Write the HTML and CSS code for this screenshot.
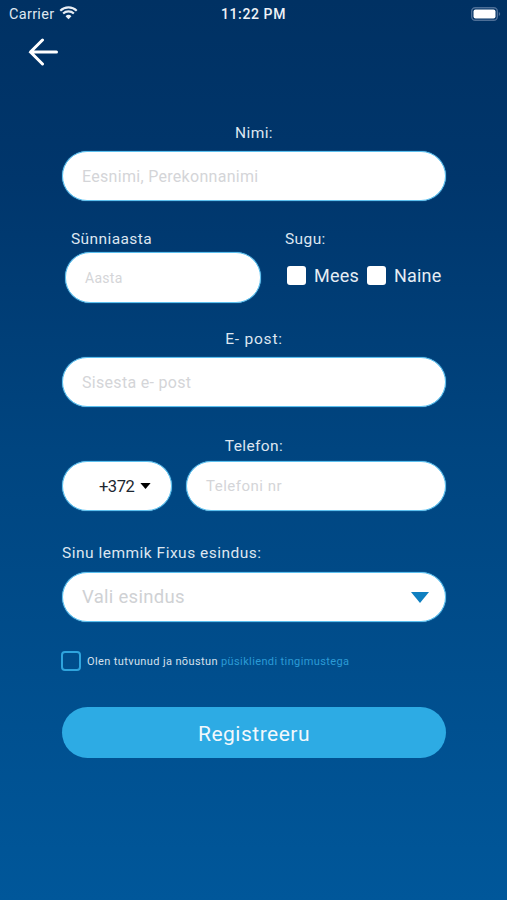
FILE: index.html
```html
<!DOCTYPE html>
<html lang="et">
<head>
<meta charset="utf-8">
<title>Registreeru</title>
<link rel="stylesheet" href="styles.css">
</head>
<body>
<div class="screen">
  <header class="status">
    <div class="status-left">
      <span>Carrier</span>
      <svg class="wifi" viewBox="0 0 18 13" width="19" height="14"><path d="M1.200 4.300A11.300 11.300 0 0 1 16.800 4.300M3.900 7A7.400 7.400 0 0 1 14.100 7" fill="none" stroke="#e8eef5" stroke-width="2"/><path d="M6.200 9.500A4 4 0 0 1 11.800 9.500L9 12.500z" fill="#e8eef5"/></svg>
    </div>
    <div class="status-time">11:22 PM</div>
    <svg class="battery" viewBox="0 0 30 14" width="30" height="14"><rect x="0.700" y="0.700" width="25.600" height="12.600" rx="3.500" fill="none" stroke="#4d6f97" stroke-width="1.400"/><rect x="2.500" y="2.500" width="22" height="9" rx="2" fill="#fff"/><path d="M27.800 5v4a2.200 2.200 0 0 0 1.400-2 2.200 2.200 0 0 0-1.400-2z" fill="#4d6f97"/></svg>
  </header>
  <div class="nav">
    <svg class="back" viewBox="0 0 30 28" width="30" height="28"><path d="M28.500 14H2.500M14.500 2L2.500 14l12 12" fill="none" stroke="#fff" stroke-width="3" stroke-linecap="round"/></svg>
  </div>
  <form class="form">
    <label class="label center first">Nimi:</label>
    <div class="field"><span class="ph">Eesnimi, Perekonnanimi</span></div>

    <div class="split">
      <div class="year">
        <label class="label year-label">Sünniaasta</label>
        <div class="field"><span class="ph small">Aasta</span></div>
      </div>
      <div class="gender">
        <label class="label">Sugu:</label>
        <div class="gender-opts">
          <span class="box"></span><span class="opt">Mees</span>
          <span class="box second"></span><span class="opt">Naine</span>
        </div>
      </div>
    </div>

    <label class="label center email-label">E- post:</label>
    <div class="field"><span class="ph">Sisesta e- post</span></div>

    <label class="label center phone-label">Telefon:</label>
    <div class="phone">
      <div class="field code"><span class="code-val">+372</span><svg class="code-caret" viewBox="0 0 12 7" width="13" height="6"><path d="M0 0h12L6 7z" fill="#000"/></svg></div>
      <div class="field grow"><span class="ph phone-ph">Telefoni nr</span></div>
    </div>

    <label class="label fav-label">Sinu lemmik Fixus esindus:</label>
    <div class="field select"><span class="ph big">Vali esindus</span><svg viewBox="0 0 18 11" width="18" height="11"><path d="M0 0h18L9 11z" fill="#0f7fc0"/></svg></div>

    <div class="terms"><span class="terms-box"></span><span class="terms-text">Olen tutvunud ja nõustun <span class="link">püsikliendi tingimustega</span></span></div>

    <button type="button" class="submit">Registreeru</button>
  </form>
</div>
</body>
</html>
```
FILE: styles.css
```css
* { box-sizing: border-box; }
html, body { margin: 0; padding: 0; }
body { font-family: Roboto, "Liberation Sans", sans-serif; color: #e3ebf3; }
.screen {
  width: 507px; height: 900px; overflow: hidden;
  background: linear-gradient(180deg, #003163 0%, #00366c 20%, #004580 50%, #00579a 100%);
}
.status {
  height: 28px; display: flex; align-items: center; justify-content: space-between;
  padding: 0 6px 0 9px; position: relative; font-size: 14.500px; color: #dfe7f0;
}
.status-left { display: flex; align-items: center; gap: 5px; letter-spacing: 0.300px; }
.wifi { margin-top: -2px; }
.status-time { position: absolute; left: 0; right: 0; text-align: center; font-size: 14px; font-weight: 500; color: #eef2f7; letter-spacing: 0.600px; }
.nav { height: 50px; padding: 10px 0 0 28px; }
.back { display: block; }
.form { padding: 0 61px 0 62px; display: flex; flex-direction: column; }
.label { display: block; font-size: 15.500px; line-height: 20px; color: #dde6f0; letter-spacing: 0.400px; }
.center { text-align: center; }
.first { margin: 45px 0 8px; }
.field {
  height: 50px; background: #fff; border-radius: 25px; border: 1.500px solid #5cc0ef;
  box-shadow: 0 0 1px #5cc0ef;
  display: flex; align-items: center; padding-left: 19px;
}
.ph { font-size: 16px; color: #d4d5d8; letter-spacing: 0.300px; }
.ph.small { font-size: 14px; letter-spacing: 0.300px; }
.phone-ph { font-size: 15px; letter-spacing: 0.500px; }
.ph.big { font-size: 18.500px; color: #cfd1d4; letter-spacing: 0.300px; }
.split { display: flex; margin-top: 28px; height: 74px; }
.year { width: 199px; padding-left: 3px; }
.year .field { height: 51px; width: 196px; }
.year-label { padding-left: 6px; margin-bottom: 3px; }
.gender { margin-left: 24px; }
.gender-opts { display: flex; align-items: center; margin-top: 16px; padding-left: 2px; }
.box { width: 19px; height: 19px; background: #fff; border-radius: 3px; }
.box.second { margin-left: 8px; }
.opt { font-size: 18px; margin-left: 8px; color: #e6edf4; letter-spacing: 0.200px; }
.email-label { margin: 26px 0 8px; letter-spacing: 0.800px; }
.phone-label { margin: 29px 0 5px; }
.phone { display: flex; gap: 14px; }
.code { width: 110px; padding-left: 36px; gap: 5px; flex: none; }
.code-val { font-size: 16.500px; color: #1c2630; letter-spacing: -0.500px; }
.grow { flex: 1; }
.fav-label { margin: 32px 0 9px; letter-spacing: 0.500px; }
.select { justify-content: space-between; padding-right: 16px; }
.terms { display: flex; align-items: center; gap: 6px; margin: 29px 0 0 -1px; }
.terms-box { width: 20px; height: 20px; border: 2px solid #2fa4dd; border-radius: 4px; }
.terms-text { font-size: 11px; color: #d5e0ec; letter-spacing: 0.380px; }
.link { color: #2b9bd6; }
.submit {
  margin-top: 36px; height: 51px; width: 384px; border: 0; border-radius: 26px; background: #2dabe4;
  color: #f2f8fc; font: 400 21px Roboto, "Liberation Sans", sans-serif; letter-spacing: 0.500px; padding-top: 3px;
}
```
